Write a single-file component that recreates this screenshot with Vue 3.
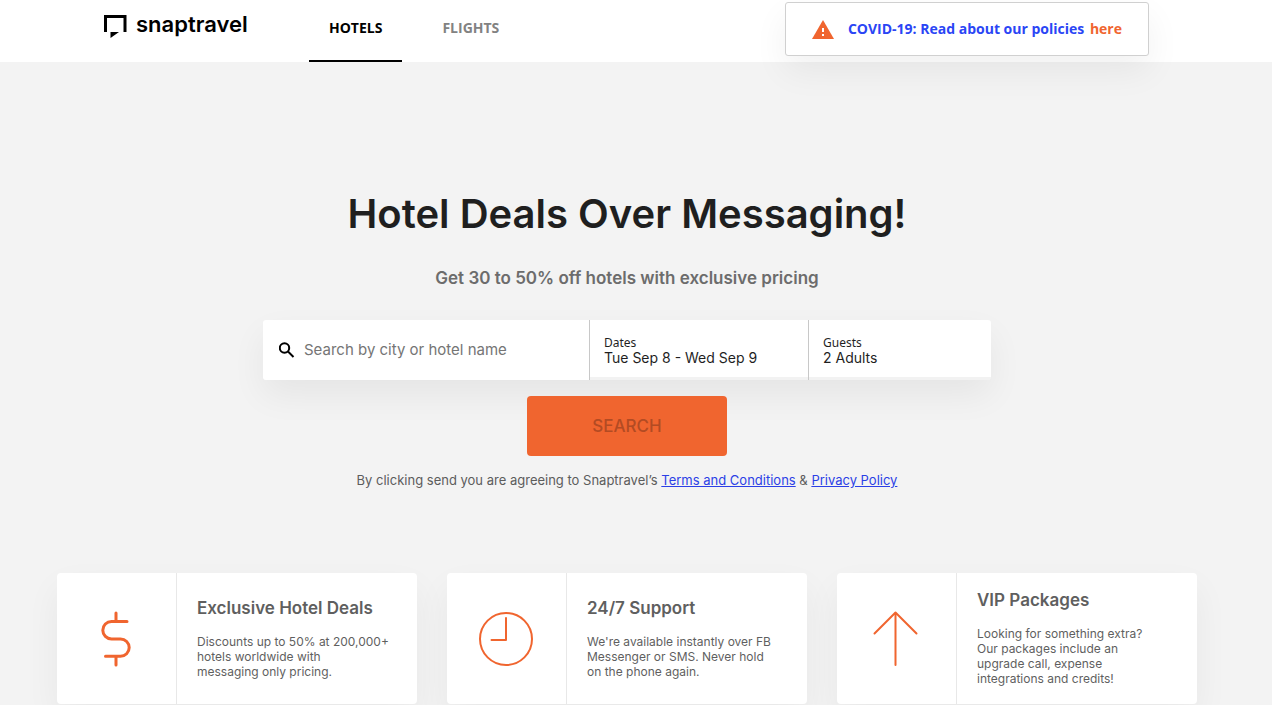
<script setup>
const cards = [
  {
    icon: 'dollar',
    title: 'Exclusive Hotel Deals',
    text: 'Discounts up to 50% at 200,000+\nhotels worldwide with\nmessaging only pricing.',
  },
  {
    icon: 'clock',
    title: '24/7 Support',
    text: "We're available instantly over FB\nMessenger or SMS. Never hold\non the phone again.",
  },
  {
    icon: 'arrow',
    title: 'VIP Packages',
    text: 'Looking for something extra?\nOur packages include an\nupgrade call, expense\nintegrations and credits!',
  },
]
</script>

<template>
  <div class="page">
    <header class="header">
      <a class="brand" href="#">
        <svg class="brand-mark" width="24" height="24" viewBox="0 0 24 24" aria-hidden="true">
          <path d="M1.500 17V1.500h19.500V17" fill="none" stroke="#000" stroke-width="3" />
          <path d="M6.500 17H15l-8.500 6z" fill="#000" />
        </svg>
        <span class="brand-name">snaptravel</span>
      </a>
      <nav class="nav">
        <a class="tab active" href="#hotels">HOTELS</a>
        <a class="tab" href="#flights">FLIGHTS</a>
      </nav>
      <div class="notice">
        <svg width="22" height="19" viewBox="0 0 22 19" aria-hidden="true">
          <path d="M11 0l11 19H0z" fill="#f0652f" />
          <path d="M10 8h2v4h-2zM10 14h2v2h-2z" fill="#fff" />
        </svg>
        <p class="notice-text">COVID-19: Read about our policies <a href="#policies">here</a></p>
      </div>
    </header>

    <main class="main">
      <h1 class="title">Hotel Deals Over Messaging!</h1>
      <p class="subtitle">Get 30 to 50% off hotels with exclusive pricing</p>

      <form class="form" @submit.prevent>
        <div class="bar">
          <div class="query">
            <svg width="16" height="16" viewBox="0 0 16 16" fill="none" stroke="#000" stroke-width="2" aria-hidden="true">
              <circle cx="5.500" cy="6" r="4.700" />
              <path d="M9 9.500l5.500 5.500" />
            </svg>
            <input class="query-input" type="text" aria-label="Search by city or hotel name" placeholder="Search by city or hotel name" />
          </div>
          <button class="field dates" type="button">
            <span class="field-label">Dates</span>
            <span class="field-value">Tue Sep 8 - Wed Sep 9</span>
          </button>
          <button class="field guests" type="button">
            <span class="field-label">Guests</span>
            <span class="field-value">2 Adults</span>
          </button>
        </div>
        <button class="submit" type="submit" disabled>SEARCH</button>
      </form>

      <p class="legal">
        By clicking send you are agreeing to Snaptravel’s
        <a href="#terms">Terms and Conditions</a> &amp; <a href="#privacy">Privacy Policy</a>
      </p>

      <section class="cards">
        <article v-for="card in cards" :key="card.icon" class="card">
          <div class="card-icon">
            <svg v-if="card.icon === 'dollar'" width="56" height="56" viewBox="0 0 56 56" class="thick" aria-hidden="true">
              <path d="M28 2v8M39 10.500H23.500a8.700 8.700 0 0 0 0 17.400h9a8.700 8.700 0 0 1 0 17.400H17.500M28 45.500V54" />
            </svg>
            <svg v-else-if="card.icon === 'clock'" width="56" height="56" viewBox="0 0 56 56" aria-hidden="true">
              <circle cx="28" cy="28" r="26" />
              <path d="M28 7v22H13.500" />
            </svg>
            <svg v-else width="56" height="56" viewBox="0 0 56 56" aria-hidden="true">
              <path d="M27.500 54V1.500M6.500 22.500l21-21 21 21" />
            </svg>
          </div>
          <div class="card-body">
            <h2 class="card-title">{{ card.title }}</h2>
            <p class="card-text">{{ card.text }}</p>
          </div>
        </article>
      </section>
    </main>
  </div>
</template>

<style>
html,
body {
  background: #f3f3f3;
}
</style>

<style scoped>
.page {
  font-family: Inter, "Noto Sans", sans-serif;
  color: #1f1f1f;
}
h1, h2, p {
  margin: 0;
}
svg {
  display: block;
  flex: none;
}
.header {
  display: flex;
  align-items: flex-start;
  height: 62px;
  padding: 0 123px 0 104px;
  background: #fff;
  box-sizing: border-box;
}
.brand {
  display: flex;
  align-items: flex-start;
  gap: 8px;
  width: 205px;
  padding-top: 8px;
  color: #000;
  text-decoration: none;
}
.brand-mark {
  margin-top: 7px;
}
.brand-name {
  font: 600 22px/32px Inter, sans-serif;
}
.nav {
  display: flex;
  gap: 20px;
  font: 700 14px/56px "Open Sans", sans-serif;
}
.tab {
  padding: 0 20px;
  height: 60px;
  border-bottom: 2px solid transparent;
  color: #828282;
  text-decoration: none;
}
.tab.active {
  color: #000;
  border-color: #000;
}
.notice {
  display: flex;
  align-items: center;
  gap: 14px;
  height: 54px;
  margin: 2px 0 0 auto;
  padding: 0 26px;
  box-sizing: border-box;
  border: 1px solid #d0d0d0;
  border-radius: 3px;
  background: #fff;
  box-shadow: 0 15px 35px rgba(0, 0, 0, 0.06);
}
.notice-text {
  font: 700 14px/20px "Open Sans", sans-serif;
  color: #2a45f5;
}
.notice-text a {
  margin-left: 2px;
  color: #f0652f;
  text-decoration: none;
}
.main {
  display: flex;
  flex-direction: column;
  align-items: center;
  padding: 128px 75px 1px 57px;
}
.title {
  font-size: 40px;
  line-height: 48px;
  font-weight: 600;
}
.subtitle {
  margin-top: 30px;
  font-size: 17px;
  line-height: 20px;
  font-weight: 600;
  color: #6c6c6c;
}
.form {
  display: flex;
  flex-direction: column;
  align-items: center;
  gap: 16px;
  width: 100%;
  margin-top: 32px;
}
.bar {
  display: flex;
  width: 100%;
  max-width: 728px;
  height: 60px;
  border-radius: 3px;
  background: #f2f2f2;
  box-shadow: 0 15px 35px rgba(0, 0, 0, 0.06);
}
.query {
  display: flex;
  flex: 1;
  align-items: center;
  gap: 9px;
  padding: 0 16px;
  border-radius: 3px 0 0 3px;
  background: #fff;
}
.query-input {
  flex: 1;
  min-width: 0;
  padding: 0;
  border: 0;
  outline: 0;
  background: none;
  font: 400 15px/20px Inter, sans-serif;
}
.query-input::placeholder {
  color: #757575;
  opacity: 1;
}
.field {
  display: flex;
  flex-direction: column;
  align-items: flex-start;
  justify-content: flex-start;
  box-sizing: border-box;
  padding: 16px 14px 0;
  border: 0;
  border-left: 1px solid #c8c8c8;
  background: linear-gradient(#fff 57px, #f2f2f2 57px);
  color: #1f1f1f;
  text-align: left;
}
.dates {
  width: 219px;
}
.guests {
  width: 183px;
  border-radius: 0 3px 3px 0;
}
.field-label {
  font: 400 12px/14px "Noto Sans", sans-serif;
}
.field-value {
  font: 400 14px/16px Inter, sans-serif;
}
.submit {
  width: 200px;
  height: 60px;
  padding: 0;
  border: 0;
  border-radius: 4px;
  background: #f0652f;
  color: #b34b23;
  font: 500 17px/20px Inter, sans-serif;
}
.legal {
  margin-top: 16px;
  font-size: 13px;
  line-height: 16px;
  font-weight: 400;
  color: #5c5c5c;
}
.legal a {
  color: #2b3fe6;
}
.cards {
  display: grid;
  grid-template-columns: repeat(3, 1fr);
  gap: 30px;
  width: 100%;
  margin-top: 85px;
}
.card {
  display: flex;
  min-height: 131px;
  border-radius: 4px;
  background: #fff;
  box-shadow: 0 15px 35px rgba(0, 0, 0, 0.05);
}
.card-icon {
  display: flex;
  flex: none;
  align-items: center;
  justify-content: center;
  box-sizing: border-box;
  width: 120px;
  padding-right: 2px;
  border-right: 1px solid #e8e8e8;
}
.card-icon svg {
  fill: none;
  stroke: #f0652f;
  stroke-width: 2;
  stroke-linecap: round;
  stroke-linejoin: round;
}
.card-icon .thick {
  stroke-width: 3;
}
.card-body {
  display: flex;
  flex-direction: column;
  justify-content: center;
  gap: 16px;
  padding: 0 0 1px 20px;
}
.card-title {
  font-size: 17px;
  line-height: 20px;
  font-weight: 600;
  color: #5f5f5f;
}
.card-text {
  font-size: 12px;
  line-height: 15px;
  color: #5f5f5f;
  white-space: pre-line;
}
</style>
